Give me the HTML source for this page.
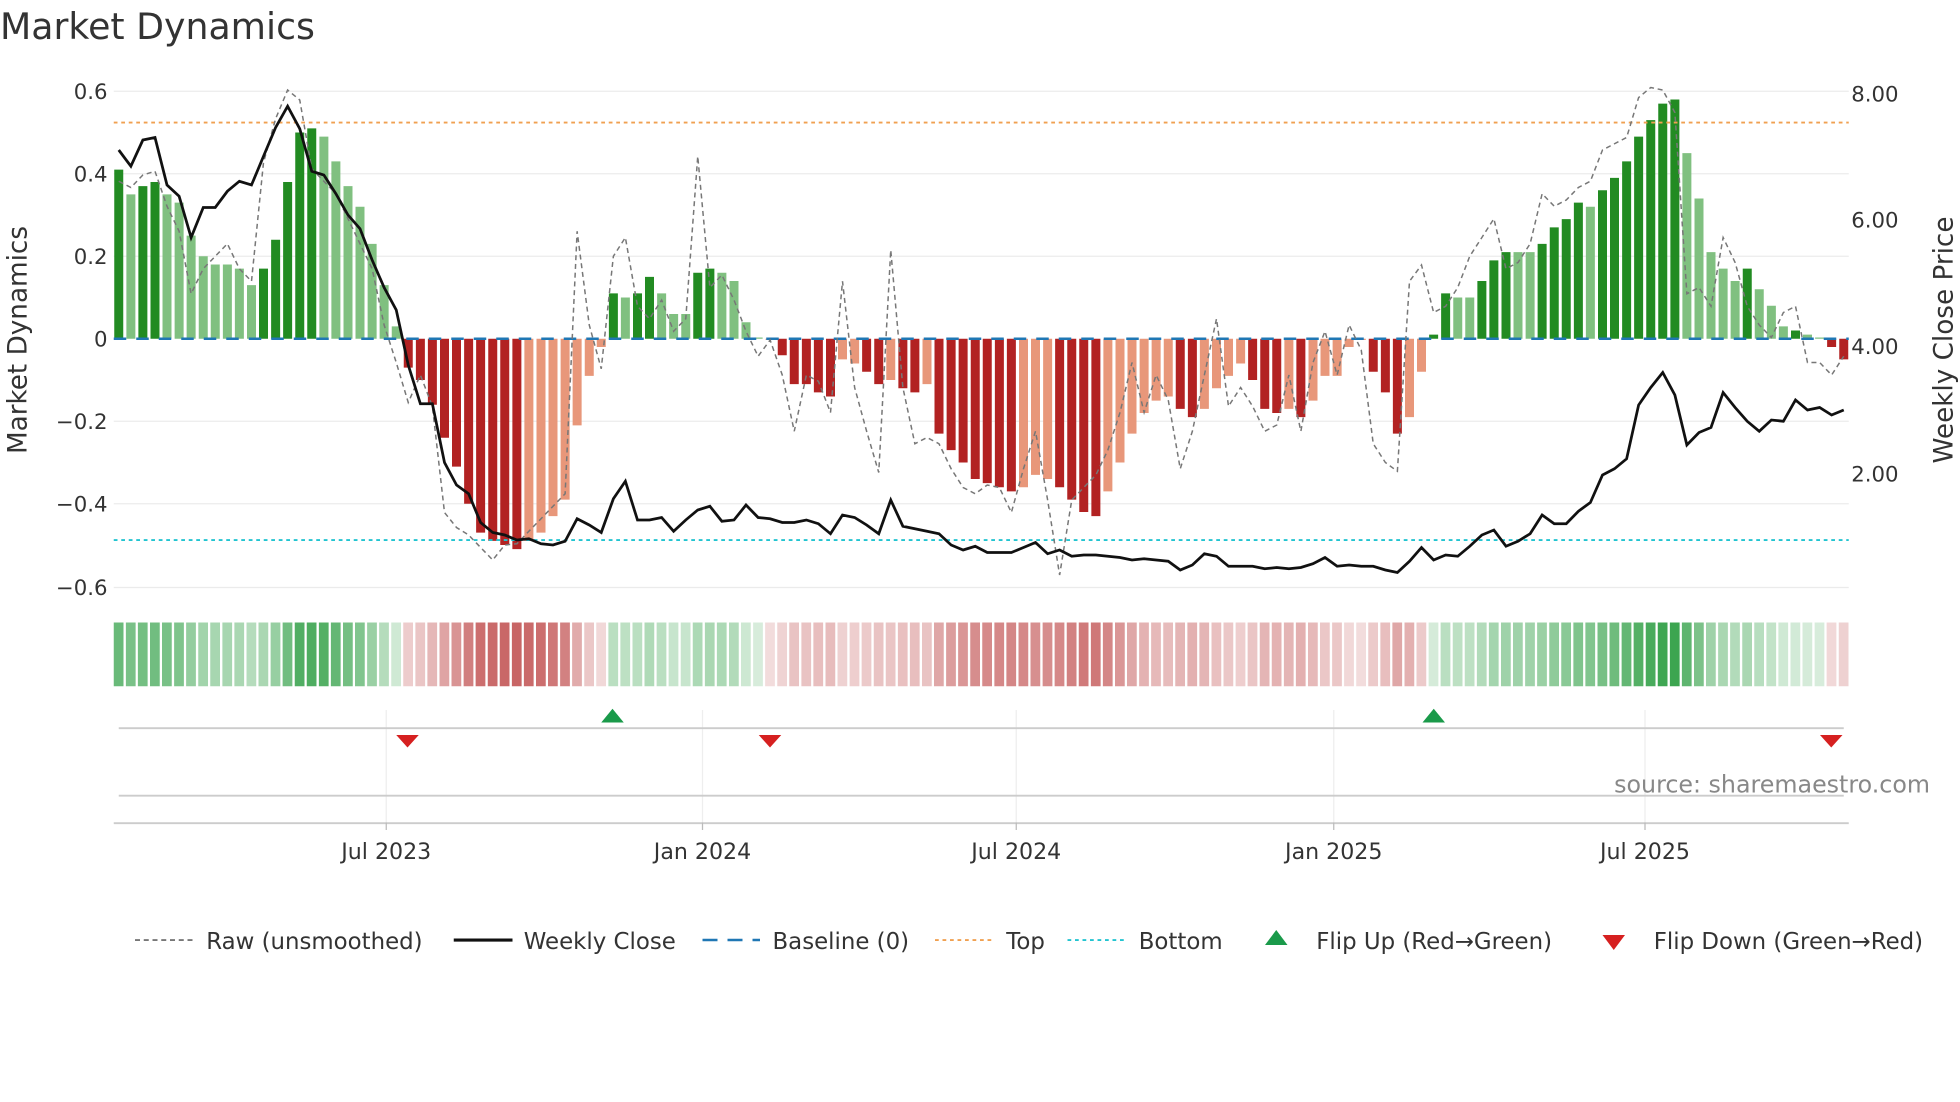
<!DOCTYPE html>
<html><head><meta charset="utf-8"><style>
html,body{margin:0;padding:0;background:#fff;}
svg{display:block;font-family:"DejaVu Sans","Liberation Sans",sans-serif;}
</style></head><body>
<svg id="s" width="1960" height="1102" viewBox="0 0 1568 881.6" xmlns="http://www.w3.org/2000/svg">
<rect width="1568" height="882" fill="#fff"/>
<text x="0" y="31" font-size="29" fill="#333">Market Dynamics</text>
<g stroke="#ebebeb" stroke-width="1">
<line x1="91" x2="1479" y1="73" y2="73"/><line x1="91" x2="1479" y1="139" y2="139"/>
<line x1="91" x2="1479" y1="205" y2="205"/><line x1="91" x2="1479" y1="337" y2="337"/>
<line x1="91" x2="1479" y1="403" y2="403"/><line x1="91" x2="1479" y1="470" y2="470"/>
</g>
<g font-size="17" fill="#333" text-anchor="end">
<text x="86" y="79">0.6</text><text x="86" y="145">0.4</text><text x="86" y="211">0.2</text>
<text x="86" y="277">0</text><text x="86" y="343">−0.2</text><text x="86" y="409">−0.4</text><text x="86" y="476">−0.6</text>
</g>
<g font-size="17" fill="#333">
<text x="1481" y="81">8.00</text><text x="1481" y="182">6.00</text><text x="1481" y="283">4.00</text><text x="1481" y="385">2.00</text>
</g>
<text transform="translate(21,272) rotate(-90)" font-size="21" fill="#333" text-anchor="middle">Market Dynamics</text>
<text transform="translate(1562,272) rotate(-90)" font-size="21" fill="#333" text-anchor="middle">Weekly Close Price</text>
<g id="bars"></g>
<line x1="91" x2="1479" y1="98" y2="98" stroke="#f0a050" stroke-width="1.5" stroke-dasharray="3,3"/>
<line x1="91" x2="1479" y1="432" y2="432" stroke="#22c4d0" stroke-width="1.5" stroke-dasharray="3,3"/>
<line x1="91" x2="1479" y1="271" y2="271" stroke="#1f77b4" stroke-width="2" stroke-dasharray="10,8"/>
<polyline id="raw" fill="none" stroke="#777" stroke-width="1.2" stroke-dasharray="4,3"/>
<polyline id="close" fill="none" stroke="#111" stroke-width="2.2"/>
<g id="heat"></g>
<g stroke="#eee" stroke-width="1">
<line x1="309" x2="309" y1="568" y2="658"/><line x1="562" x2="562" y1="568" y2="658"/>
<line x1="813" x2="813" y1="568" y2="658"/><line x1="1067" x2="1067" y1="568" y2="658"/><line x1="1316" x2="1316" y1="568" y2="658"/>
</g>
<line x1="95" x2="1475" y1="582.5" y2="582.5" stroke="#ccc" stroke-width="1.5"/>
<line x1="95" x2="1475" y1="636.5" y2="636.5" stroke="#ccc" stroke-width="1.5"/>
<line x1="91" x2="1479" y1="658.5" y2="658.5" stroke="#ccc" stroke-width="1.5"/>
<g stroke="#bbb"><line x1="309" x2="309" y1="658" y2="664"/><line x1="562" x2="562" y1="658" y2="664"/><line x1="813" x2="813" y1="658" y2="664"/><line x1="1067" x2="1067" y1="658" y2="664"/><line x1="1316" x2="1316" y1="658" y2="664"/></g>
<g fill="#1a9a4a"><path d="M490,567 l9,11 h-18z"/><path d="M1147,567 l9,11 h-18z"/></g>
<g fill="#d62020"><path d="M317,588 h18 l-9,10z"/><path d="M607,588 h18 l-9,10z"/><path d="M1456,588 h18 l-9,10z"/></g>
<text x="1544" y="634" font-size="19" fill="#888" text-anchor="end">source: sharemaestro.com</text>
<g font-size="17.7" fill="#333" text-anchor="middle">
<text x="309" y="687">Jul 2023</text><text x="562" y="687">Jan 2024</text><text x="813" y="687">Jul 2024</text><text x="1067" y="687">Jan 2025</text><text x="1316" y="687">Jul 2025</text>
</g>
<g font-size="18.3" fill="#333">
<line x1="108" x2="154" y1="752" y2="752" stroke="#777" stroke-width="1.5" stroke-dasharray="4,3"/><text x="165" y="759">Raw (unsmoothed)</text>
<line x1="363" x2="410" y1="752" y2="752" stroke="#111" stroke-width="2.5"/><text x="419" y="759">Weekly Close</text>
<line x1="562" x2="608" y1="752" y2="752" stroke="#1f77b4" stroke-width="2" stroke-dasharray="12,8"/><text x="618" y="759">Baseline (0)</text>
<line x1="748" x2="794" y1="752" y2="752" stroke="#f0a050" stroke-width="1.5" stroke-dasharray="3,3"/><text x="805" y="759">Top</text>
<line x1="854" x2="900" y1="752" y2="752" stroke="#22c4d0" stroke-width="1.5" stroke-dasharray="3,3"/><text x="911" y="759">Bottom</text>
<path d="M1021,744 l9,12 h-18z" fill="#1a9a4a"/><text x="1053" y="759">Flip Up (Red→Green)</text>
<path d="M1282,748 h18 l-9,12z" fill="#d62020"/><text x="1323" y="759">Flip Down (Green→Red)</text>
</g>
</svg>
<script>
var v=[[.41,1],[.35,0],[.37,1],[.38,1],[.35,0],[.33,0],[.25,0],[.20,0],[.18,0],[.18,0],[.17,0],[.13,0],[.17,1],[.24,1],[.38,1],[.50,1],[.51,1],[.49,0],[.43,0],[.37,0],[.32,0],[.23,0],[.13,0],[.03,0],
[-.07,1],[-.10,1],[-.16,1],[-.24,1],[-.31,1],[-.40,1],[-.47,1],[-.49,1],[-.50,1],[-.51,1],[-.49,0],[-.47,0],[-.43,0],[-.39,0],[-.21,0],[-.09,0],[-.02,0],
[.11,1],[.10,0],[.11,1],[.15,1],[.11,0],[.06,0],[.06,0],[.16,1],[.17,1],[.16,0],[.14,0],[.04,0],[.003,0],
[-.003,0],[-.04,1],[-.11,1],[-.11,1],[-.13,1],[-.14,1],[-.05,0],[-.06,0],[-.08,1],[-.11,1],[-.10,0],[-.12,1],[-.13,1],[-.11,0],[-.23,1],[-.27,1],[-.30,1],[-.34,1],[-.35,1],[-.36,1],[-.37,1],[-.36,0],[-.33,0],[-.34,0],[-.36,1],[-.39,1],[-.42,1],[-.43,1],[-.37,0],[-.30,0],[-.23,0],[-.18,0],[-.15,0],[-.14,0],[-.17,1],[-.19,1],[-.17,0],[-.12,0],[-.09,0],[-.06,0],[-.10,1],[-.17,1],[-.18,1],[-.17,0],[-.19,1],[-.15,0],[-.09,0],[-.09,0],[-.02,0],[-.003,0],[-.08,1],[-.13,1],[-.23,1],[-.19,0],[-.08,0],
[.01,1],[.11,1],[.10,0],[.10,0],[.14,1],[.19,1],[.21,1],[.21,0],[.21,0],[.23,1],[.27,1],[.29,1],[.33,1],[.32,0],[.36,1],[.39,1],[.43,1],[.49,1],[.53,1],[.57,1],[.58,1],[.45,0],[.34,0],[.21,0],[.17,0],[.14,0],[.17,1],[.12,0],[.08,0],[.03,0],[.02,1],[.01,0],[.003,0],[-.02,1],[-.05,1]];
var n=v.length,x0=95,x1=1475,dx=(x1-x0)/(n-1),b="",h="";
for(var i=0;i<n;i++){var x=x0+i*dx,val=v[i][0],y=271-val*330,c;
if(val>=0)c=v[i][1]?"#228b22":"#80c080";else c=v[i][1]?"#b22222":"#e8977a";
b+='<rect x="'+(x-3.6).toFixed(1)+'" y="'+Math.min(y,271).toFixed(1)+'" width="7.2" height="'+Math.max(Math.abs(val*330),1).toFixed(1)+'" fill="'+c+'"/>';
var t=Math.min(Math.abs(val)/0.58,1)*0.8+0.2,r,g,bl;
if(val>=0){r=255+(60-255)*t;g=255+(165-255)*t;bl=255+(80-255)*t;}else{r=255+(195-255)*t;g=255+(85-255)*t;bl=255+(85-255)*t;}
h+='<rect x="'+(x-4).toFixed(1)+'" y="498" width="7.8" height="51" fill="rgb('+(r|0)+','+(g|0)+','+(bl|0)+')"/>';}
document.getElementById("bars").innerHTML=b;document.getElementById("heat").innerHTML=h;
var cy=[120,133,112,110,148,157,190,166,166,153,145,148,125,102,85,103,137,140,155,172,183,208,230,248,292,323,323,370,388,395,418,426,428,432,431,435,436,433,415,420,426,399,385,416,416,414,425,416,408,405,417,416,404,414,415,418,418,416,419,427,412,414,420,427,400,421,423,425,427,436,440,437,442,442,442,438,434,443,440,445,444,444,445,446,448,447,448,449,456,452,443,445,453,453,453,455,454,455,454,451,446,453,452,453,453,456,458,449,438,448,444,445,437,428,424,437,433,427,412,419,419,409,402,380,375,367,324,310,298,316,356,346,342,314,326,337,345,336,337,320,328,326,332,328];
var ry=[145,150,140,137,165,185,235,215,205,195,215,225,130,95,72,80,135,145,155,175,195,215,260,290,322,300,325,410,422,428,438,448,436,435,425,415,405,395,185,260,295,205,190,245,255,240,265,255,125,230,220,240,265,285,272,300,345,300,305,330,225,310,345,378,200,310,355,350,355,375,390,395,388,390,410,375,345,400,460,400,390,380,360,330,290,330,300,320,375,345,300,255,325,310,325,345,340,300,345,290,265,300,260,280,355,370,377,225,212,250,245,230,205,190,175,215,210,195,155,165,160,150,145,120,115,110,78,70,72,90,235,230,245,190,210,245,260,270,250,245,290,290,300,285];
function pts(a){var m=a.length,d=(x1-x0)/(m-1),s="";for(var i=0;i<m;i++)s+=(x0+i*d).toFixed(1)+","+a[i]+" ";return s;}
document.getElementById("close").setAttribute("points",pts(cy));
document.getElementById("raw").setAttribute("points",pts(ry));
</script>
</body></html>
